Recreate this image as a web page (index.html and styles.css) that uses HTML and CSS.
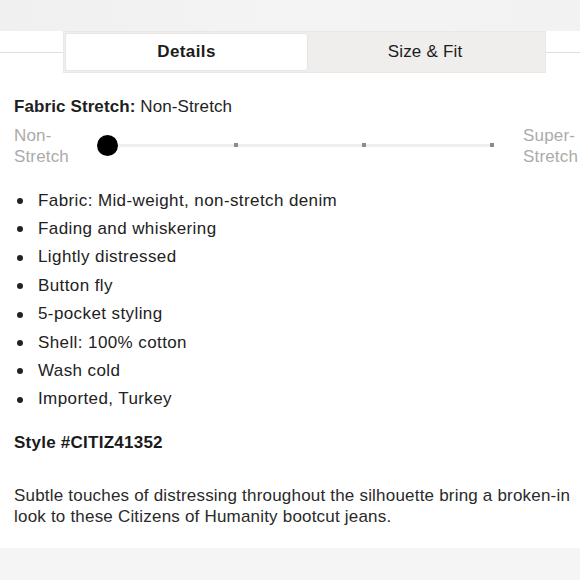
FILE: index.html
```html
<!DOCTYPE html>
<html>
<head>
<meta charset="utf-8">
<link rel="stylesheet" href="styles.css">
</head>
<body>
<div class="page">
  <div class="topband"></div>
  <div class="tabs-row">
    <div class="rule rule-left"></div>
    <div class="tabs">
      <div class="tab tab-active">Details</div>
      <div class="tab">Size &amp; Fit</div>
    </div>
    <div class="rule rule-right"></div>
  </div>
  <div class="content">
    <div class="stretch-title"><b>Fabric Stretch:</b> Non-Stretch</div>
    <div class="slider-row">
      <div class="slider-label">Non-<br>Stretch</div>
      <div class="track">
        <div class="track-line"></div>
        <div class="tick t1"></div>
        <div class="tick t2"></div>
        <div class="tick t3"></div>
        <div class="knob"></div>
      </div>
      <div class="slider-label slider-label-right">Super-<br>Stretch</div>
    </div>
    <ul class="features">
      <li>Fabric: Mid-weight, non-stretch denim</li>
      <li>Fading and whiskering</li>
      <li>Lightly distressed</li>
      <li>Button fly</li>
      <li>5-pocket styling</li>
      <li>Shell: 100% cotton</li>
      <li>Wash cold</li>
      <li>Imported, Turkey</li>
    </ul>
    <div class="style-no">Style #CITIZ41352</div>
    <p class="desc">Subtle touches of distressing throughout the silhouette bring a broken-in look to these Citizens of Humanity bootcut jeans.</p>
  </div>
  <div class="bottomband"></div>
</div>
</body>
</html>
```
FILE: styles.css
```css
html, body {
  margin: 0;
  padding: 0;
  background: #ffffff;
}
body {
  font-family: "Liberation Sans", Arial, sans-serif;
  color: #1e1e1e;
  width: 580px;
  height: 580px;
  overflow: hidden;
}
.page {
  display: flex;
  flex-direction: column;
  height: 580px;
}
.topband {
  height: 31px;
  background: linear-gradient(90deg, #f1f0f0 0%, #f5f4f4 50%, #f3f2f2 100%);
  flex: 0 0 31px;
}
.tabs-row {
  display: flex;
  align-items: center;
  height: 42px;
}
.rule {
  height: 1px;
  background: #dedede;
}
.rule-left { width: 63px; }
.rule-right { flex: 1; }
.tabs {
  width: 477px;
  height: 36px;
  padding: 2px;
  border: 1px solid #e9e8e7;
  background: #efeeed;
  display: flex;
}
.tab {
  flex: 1;
  display: flex;
  align-items: center;
  justify-content: center;
  font-size: 17px;
  letter-spacing: 0.2px;
  color: #1c1c1c;
}
.tab-active {
  flex: 0 0 241px;
  background: #ffffff;
  font-weight: bold;
  letter-spacing: 0.4px;
  border-radius: 2px;
  box-shadow: 0 0 2px rgba(0, 0, 0, 0.12);
}
.content {
  flex: 1;
  padding: 24px 2px 0 14px;
}
.stretch-title {
  font-size: 17px;
  letter-spacing: 0.1px;
  line-height: 20px;
  color: #1e1e1e;
}
.slider-row {
  display: flex;
  align-items: center;
  margin-top: 8px;
  height: 42px;
}
.slider-label {
  width: 83px;
  font-size: 17px;
  letter-spacing: 0.15px;
  line-height: 21px;
  color: #ababab;
}
.slider-label-right {
  width: auto;
  margin-left: auto;
}
.track {
  position: relative;
  width: 406px;
  height: 42px;
}
.track-line {
  position: absolute;
  left: 11px;
  right: 11px;
  top: 19px;
  height: 3px;
  background: #eeeeee;
}
.tick {
  position: absolute;
  top: 18px;
  width: 4px;
  height: 4px;
  background: #8c8c8c;
  margin-left: -2px;
}
.t1 { left: 139px; }
.t2 { left: 267px; }
.t3 { left: 395px; }
.knob {
  position: absolute;
  left: 0;
  top: 10px;
  width: 21px;
  height: 21px;
  border-radius: 50%;
  background: #000000;
}
.features {
  list-style: none;
  margin: 19.5px 0 0 0;
  padding: 0;
}
.features li {
  position: relative;
  padding-left: 24px;
  font-size: 17px;
  letter-spacing: 0.4px;
  line-height: 28.4px;
  color: #222222;
}
.features li::before {
  content: "";
  position: absolute;
  left: 3px;
  top: 11.5px;
  width: 6px;
  height: 6px;
  border-radius: 50%;
  background: #222222;
}
.style-no {
  margin-top: 19px;
  font-size: 17px;
  letter-spacing: 0.25px;
  line-height: 20px;
  font-weight: bold;
  color: #1a1a1a;
}
.desc {
  margin: 32px 0 0 0;
  padding-right: 0;
  font-size: 17px;
  letter-spacing: 0.2px;
  line-height: 21px;
  color: #2a2a2a;
}
.bottomband {
  flex: 0 0 32px;
  background: #f5f5f5;
}
```
